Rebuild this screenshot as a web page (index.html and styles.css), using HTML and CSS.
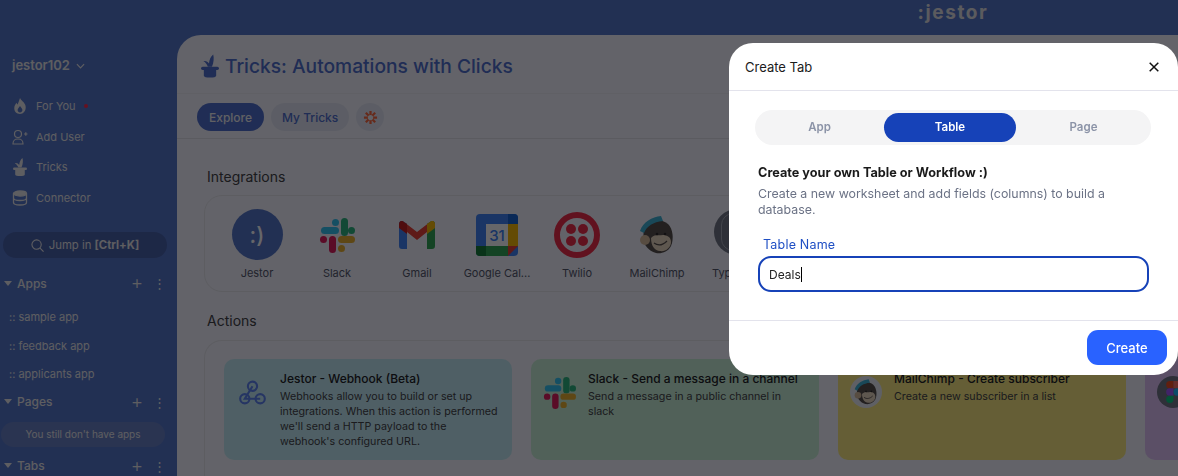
FILE: index.html
```html
<!DOCTYPE html>
<html lang="en">
<head>
<meta charset="utf-8">
<title>Create Tab</title>
<link rel="stylesheet" href="styles.css">
</head>
<body>
<div class="app">
  <header class="topbar"><span class="logo">:jestor</span></header>
  <div class="shell">
    <aside class="sidebar">
      <div class="account">jestor102
        <svg class="chev" viewBox="0 0 10 6" width="9" height="6"><path d="M1 1l4 4 4-4" fill="none" stroke="currentColor" stroke-width="1.3"/></svg>
      </div>
      <nav class="nav">
        <div class="nav-row">
          <svg viewBox="0 0 16 20" width="13" height="16"><path fill="currentColor" d="M8 0c1 3 6 5 7 10 1 6-3 10-7 10s-8-3-7-9c.4-2 1.500-3 2.500-5 .5 1 1 2 1.500 2C6 6 7 3 8 0zm0 10c-1 2-3 3-3 5s1.500 3 3 3 3-1 3-3-2-3-3-5z"/></svg>
          <span>For You</span><i class="dot"></i>
        </div>
        <div class="nav-row">
          <svg viewBox="0 0 16 16" width="16" height="16" fill="none" stroke="currentColor" stroke-width="1.200"><circle cx="6" cy="5" r="3.500"/><path d="M1 15c0-2 0-5 5-5s5 3 5 5zM12 5h3.500M13.800 3.200v3.500"/></svg>
          <span>Add User</span>
        </div>
        <div class="nav-row">
          <svg viewBox="0 0 14 18" width="14" height="18"><use href="#hat"/></svg>
          <span>Tricks</span>
        </div>
        <div class="nav-row">
          <svg viewBox="0 0 16 16" width="16" height="16" fill="none" stroke="currentColor" stroke-width="1.300"><ellipse cx="8" cy="3.500" rx="6.500" ry="2.500" fill="currentColor"/><path d="M1.500 3.500v9c0 1.500 3 2.500 6.500 2.500s6.500-1 6.500-2.500v-9M1.500 8c0 1.500 3 2.500 6.500 2.500s6.500-1 6.500-2.500"/></svg>
          <span>Connector</span>
        </div>
      </nav>
      <div class="jump">
        <svg viewBox="0 0 14 14" width="13" height="13" fill="none" stroke="currentColor" stroke-width="1.200"><circle cx="6" cy="6" r="5"/><path d="M9.500 9.500L13.500 13.500"/></svg>
        <span>Jump in <b>[Ctrl+K]</b></span>
      </div>
      <div class="section section-apps"><i class="tri"></i><span class="section-name">Apps</span><span class="plus">+</span><span class="more">⋮</span></div>
      <ul class="apps">
        <li>:: sample app</li>
        <li>:: feedback app</li>
        <li>:: applicants app</li>
      </ul>
      <div class="section"><i class="tri"></i><span class="section-name">Pages</span><span class="plus">+</span><span class="more">⋮</span></div>
      <div class="empty">You still don't have apps</div>
      <div class="section"><i class="tri"></i><span class="section-name">Tabs</span><span class="plus">+</span><span class="more">⋮</span></div>
    </aside>
    <main class="main">
      <div class="title-row">
        <svg class="title-hat" viewBox="0 0 14 18" width="18" height="24"><use href="#hat"/></svg>
        <h1>Tricks: Automations with Clicks</h1>
      </div>
      <div class="tabs-row">
        <span class="pill pill-on">Explore</span>
        <span class="pill pill-mine">My Tricks</span>
        <span class="pill pill-round">
          <svg viewBox="0 0 16 16" width="15" height="15" fill="none" stroke="#ff6a3c" stroke-width="2.400"><path d="M8 1v14M1 8h14M3 3l10 10M13 3L3 13"/><circle cx="8" cy="8" r="2.800" fill="#f2f4fb" stroke="none"/></svg>
        </span>
      </div>
      <h2>Integrations</h2>
      <div class="panel integrations">
        <div class="tile">
          <span class="tile-icon jestor-icon">:)</span>
          <span class="tile-name">Jestor</span>
        </div>
        <div class="tile">
          <svg class="tile-icon" viewBox="0 0 36 36"><use href="#slack"/></svg>
          <span class="tile-name">Slack</span>
        </div>
        <div class="tile">
          <svg class="tile-icon" viewBox="0 0 36 28" width="36" height="28">
            <path fill="#4285f4" d="M0 3c0-3 3-4 5-2l3 2v25H3c-2 0-3-1-3-3z"/>
            <path fill="#34a853" d="M36 3c0-3-3-4-5-2l-3 2v25h5c2 0 3-1 3-3z"/>
            <path fill="#ea4335" d="M5 1l13 10L31 1v0l-3 2v8l-10 8L8 11V3z"/>
            <path fill="#fbbc04" d="M28 3l3-2c2-2 5-1 5 2v4l-8 6z"/>
            <path fill="#c5221f" d="M0 3c0-3 3-4 5-2l3 2v10L0 7z"/>
          </svg>
          <span class="tile-name">Gmail</span>
        </div>
        <div class="tile">
          <svg class="tile-icon" viewBox="0 0 42 42" width="42" height="42">
            <rect width="42" height="42" rx="4" fill="#4285f4"/>
            <path fill="#1967d2" d="M32 0h6a4 4 0 0 1 4 4v6H32z"/>
            <rect x="32" y="10" width="10" height="22" fill="#fbbc04"/>
            <path fill="#34a853" d="M0 32h32v10H4a4 4 0 0 1-4-4z"/>
            <path fill="#188038" d="M0 32h10v10H4a4 4 0 0 1-4-4z"/>
            <path fill="#ea4335" d="M32 42V32h10z"/>
            <rect x="10" y="10" width="22" height="22" fill="#fff"/>
            <text x="21" y="27" class="cal-text">31</text>
          </svg>
          <span class="tile-name">Google Cal...</span>
        </div>
        <div class="tile">
          <svg class="tile-icon" viewBox="0 0 46 46" width="46" height="46"><circle cx="23" cy="23" r="20" fill="none" stroke="#f22f46" stroke-width="6"/><circle cx="17" cy="17" r="5" fill="#f22f46"/><circle cx="29" cy="17" r="5" fill="#f22f46"/><circle cx="17" cy="29" r="5" fill="#f22f46"/><circle cx="29" cy="29" r="5" fill="#f22f46"/></svg>
          <span class="tile-name">Twilio</span>
        </div>
        <div class="tile">
          <svg class="tile-icon" viewBox="0 0 36 38" width="36" height="38"><use href="#chimp"/></svg>
          <span class="tile-name">MailChimp</span>
        </div>
        <div class="tile">
          <span class="tile-icon typeform-icon"><i class="typeform-ring"></i></span>
          <span class="tile-name">Typeform</span>
        </div>
      </div>
      <h2 class="actions-title">Actions</h2>
      <div class="panel actions">
        <article class="action action-blue">
          <svg class="action-icon action-icon-hook" viewBox="0 0 28 26" width="27" height="25" fill="none" stroke="#5f86f0" stroke-width="2.200"><circle cx="14" cy="6.500" r="4.800"/><circle cx="6" cy="19.500" r="4.800"/><circle cx="22" cy="19.500" r="4.800"/><path d="M14 6.500L6 19.500H22"/></svg>
          <div><h3>Jestor - Webhook (Beta)</h3><p>Webhooks allow you to build or set up integrations. When this action is performed we'll send a HTTP payload to the webhook's configured URL.</p></div>
        </article>
        <article class="action action-green">
          <svg class="action-icon" viewBox="0 0 36 36" width="33" height="33"><use href="#slack"/></svg>
          <div><h3>Slack - Send a message in a channel</h3><p>Send a message in a public channel in slack</p></div>
        </article>
        <article class="action action-yellow">
          <span class="chimp-badge"><svg viewBox="0 0 36 38" width="24" height="26"><use href="#chimp"/></svg></span>
          <div><h3>MailChimp - Create subscriber</h3><p>Create a new subscriber in a list</p></div>
        </article>
        <article class="action action-purple">
          <span class="figma-badge">
            <svg viewBox="0 0 12 18" width="15" height="22"><path fill="#f24e1e" d="M3 0h3v6H3a3 3 0 0 1 0-6z"/><path fill="#ff7262" d="M6 0h3a3 3 0 0 1 0 6H6z"/><path fill="#a259ff" d="M3 6h3v6H3a3 3 0 0 1 0-6z"/><circle cx="9" cy="9" r="3" fill="#1abcfe"/><path fill="#0acf83" d="M3 12h3v3a3 3 0 1 1-3-3z"/></svg>
          </span>
        </article>
      </div>
    </main>
  </div>
</div>

<div class="overlay"></div>

<section class="modal">
  <header class="modal-head">
    <span>Create Tab</span>
    <svg viewBox="0 0 10 10" width="10" height="10" fill="none" stroke="#111" stroke-width="1.500"><path d="M.7.7l8.600 8.600M9.300.7L.7 9.300"/></svg>
  </header>
  <div class="modal-body">
    <div class="segment">
      <span>App</span>
      <span class="seg-on">Table</span>
      <span>Page</span>
    </div>
    <h4>Create your own Table or Workflow :)</h4>
    <p class="desc">Create a new worksheet and add fields (columns) to build a database.</p>
    <label class="field-label">Table Name</label>
    <div class="input"><span>Deals</span><i class="caret"></i></div>
  </div>
  <footer class="modal-foot"><span class="create">Create</span></footer>
</section>

<svg class="defs" width="0" height="0">
  <defs>
    <g id="hat" fill="currentColor">
      <rect x="0" y="9.500" width="14" height="2.600" rx="1.300"/>
      <path d="M2.200 11.500h9.600v5c0 1-2 1.500-4.800 1.500s-4.800-.5-4.800-1.500z"/>
      <path d="M5.300 9.500C4.700 8 3.500 6 1.800 5.200 3.600 4.600 5.300 5.600 6.200 7 6.500 4 7.500 1.500 9.500 0c.7 2.500.5 6.500-1 9.500z"/>
    </g>
    <g id="slack">
      <rect x="13" y="2" width="7" height="7" rx="3.500" fill="#36c5f0"/>
      <rect x="2" y="10" width="18" height="7" rx="3.500" fill="#36c5f0"/>
      <rect x="22" y="1" width="7" height="18" rx="3.500" fill="#2eb67d"/>
      <rect x="29" y="10" width="7" height="7" rx="3.500" fill="#2eb67d"/>
      <rect x="1" y="19" width="7" height="7" rx="3.500" fill="#e01e5a"/>
      <rect x="10" y="19" width="7" height="17" rx="3.500" fill="#e01e5a"/>
      <rect x="19" y="19" width="17" height="7" rx="3.500" fill="#ecb22e"/>
      <rect x="19" y="28" width="7" height="7" rx="3.500" fill="#ecb22e"/>
    </g>
    <g id="chimp">
      <path fill="#57504a" d="M5 12C8 4 20 1 29 8c5 5 6 15 3 22-3 6-10 8-15 7C9 35 5 28 4 24z"/>
      <path fill="#3fb4d4" d="M1 15C4 6 13 1 22 0l2 5C14 6 8 10 5 17z"/>
      <circle cx="6" cy="24" r="5" fill="#d9bd9c"/>
      <path fill="#ecd9bd" d="M12 22c3-4 8-2 12-3 4 0 8 2 8 7 0 6-6 10-11 9-5 0-9-5-9-13z"/>
      <path fill="none" stroke="#57504a" stroke-width="1.300" d="M15 27c4 3 9 2 13-2"/>
      <circle cx="18" cy="18" r="1.300" fill="#2d2a26"/><circle cx="26" cy="18" r="1.300" fill="#2d2a26"/>
    </g>
  </defs>
</svg>
</body>
</html>
```
FILE: styles.css
```css
* { box-sizing: border-box; }
html, body { margin: 0; padding: 0; width: 1178px; height: 476px; overflow: hidden; }
body { font-family: Inter, "Liberation Sans", sans-serif; background: #5678c8; color: #333; }
h1, h2, h3, h4, p, ul { margin: 0; padding: 0; }
.defs { position: absolute; }

.app { width: 1178px; height: 476px; display: flex; flex-direction: column; background: #5678c8; }
.topbar { height: 35px; flex: none; display: flex; justify-content: center; padding-left: 728px; }
.logo { font-size: 19px; font-weight: 700; letter-spacing: 1.6px; color: #e4e4e4; line-height: 26px; }
.shell { display: flex; flex: 1; min-height: 0; }

.sidebar { width: 177px; flex: none; color: #eaeaea; font-size: 11px; }
.account { padding: 22px 0 0 12px; height: 56px; font-size: 13px; font-weight: 600; line-height: 16px; display: flex; align-items: flex-start; gap: 6px; }
.chev { margin-top: 6px; }
.nav { padding-left: 12px; }
.nav-row { height: 30.500px; display: flex; align-items: center; gap: 8px; }
.nav-row svg { width: 16px; flex: none; }
.nav-row span { font-weight: 400; }
.dot { width: 4px; height: 4px; margin-left: 0; border-radius: 50%; background: #ff2b4a; }
.jump { margin: 19px 10px 0 3px; height: 26px; border-radius: 13px; background: #4a64a8; display: flex; align-items: center; justify-content: center; gap: 5px; font-size: 11.300px; }
.jump b { font-weight: 700; }
.section { display: flex; align-items: center; height: 20px; padding: 0 0 0 4px; font-size: 12px; font-weight: 500; }
.section-apps { margin-top: 15px; }
.tri { width: 0; height: 0; border-left: 4px solid transparent; border-right: 4px solid transparent; border-top: 5px solid #eaeaea; margin-right: 5px; }
.section-name { flex: 1; }
.plus { font-size: 19px; font-weight: 300; width: 14px; text-align: center; line-height: 20px; margin-right: 9px; }
.more { font-size: 13px; width: 8px; text-align: center; margin-right: 16px; }
.apps { list-style: none; padding: 10px 0 3px 9px; }
.apps li { height: 28.500px; line-height: 28.500px; font-size: 11px; }
.empty { margin: 10px 12px 9px 1px; height: 25px; border-radius: 13px; background: #6a83c4; line-height: 25px; text-align: center; font-size: 10px; }

.main { flex: 1; background: #f7f8fe; border-radius: 24px 0 0 0; overflow: hidden; color: #333; min-width: 0; }
.title-row { height: 59px; padding: 4px 0 0 24px; border-bottom: 1px solid #f0f0f4; display: flex; align-items: center; gap: 6px; }
.title-row h1 { font-size: 19.200px; font-weight: 500; color: #5070cc; }
.title-hat { color: #5070cc; }
.tabs-row { height: 45px; padding: 9px 0 0 20px; border-bottom: 1px solid #e4e4e8; display: flex; gap: 7px; align-items: flex-start; }
.pill { height: 28px; padding: 0 12px; border-radius: 14px; background: #e6e9f5; color: #5070cc; font-size: 12px; font-weight: 500; display: flex; align-items: center; }
.pill-on { background: #5070cc; color: #f2f2f2; }
.pill-mine { padding: 0 11px; }
.pill-round { width: 28px; padding: 0; justify-content: center; }
h2 { font-size: 14px; font-weight: 400; color: #444; padding: 29px 0 0 30px; line-height: 18px; }
.panel { margin-left: 27px; border: 1px solid #e8e8ec; border-radius: 18px; }
.integrations { height: 97px; margin-top: 9px; display: flex; padding-top: 13px; padding-left: 12px; overflow: hidden; }
.tile { width: 80px; flex: none; display: flex; flex-direction: column; align-items: center; position: relative; height: 71px; justify-content: flex-end; }
.tile-icon { position: absolute; top: 0; width: 36px; height: 36px; }
.tile:nth-child(1) .tile-icon { width: 51px; height: 51px; }
.tile:nth-child(2) .tile-icon { top: 8px; }
.tile:nth-child(3) .tile-icon { top: 12px; height: 28px; }
.tile:nth-child(4) .tile-icon { top: 5px; width: 42px; height: 42px; }
.tile:nth-child(5) .tile-icon { top: 3px; width: 46px; height: 46px; }
.tile:nth-child(6) .tile-icon { top: 7px; width: 36px; height: 38px; }
.jestor-icon { background: #5678c8; color: #fff; border-radius: 50%; display: flex; align-items: center; justify-content: center; font-size: 22px; font-weight: 500; }
.typeform-icon { top: 0; width: 46px !important; height: 46px !important; background: #737885; border-radius: 50%; display: flex; align-items: center; justify-content: center; }
.typeform-ring { width: 32px; height: 38px; border: 1px solid #a6aab4; border-radius: 12px; }
.tile-name { font-size: 11px; color: #555a6a; white-space: nowrap; line-height: 14px; }
.cal-text { font: 500 15px Inter, sans-serif; fill: #4285f4; text-anchor: middle; }
.actions-title { padding-top: 20px; line-height: 18px; }
.actions { margin-top: 10px; height: 200px; display: flex; gap: 19px; padding: 18px 0 0 19px; border-right: 0; border-radius: 18px 0 0 0; }
.action { width: 288px; height: 101px; flex: none; border-radius: 10px; display: flex; padding: 11px 8px 0 15px; gap: 14px; }
.action h3 { font-size: 12px; font-weight: 500; color: #222; line-height: 18px; white-space: nowrap; }
.action p { font-size: 10.700px; line-height: 15px; color: #444; margin-top: 1px; }
.action-icon { flex: none; margin-top: 6px; }
.action-icon-hook { margin-top: 10px; }
.action-blue { background: #c6eef5; }
.action-green { background: #caf2d6; padding: 11px 30px 0 12px; gap: 12px; }
.action-yellow { background: #fcec80; padding-left: 12px; gap: 12px; }
.action-purple { background: #e3c6f8; padding-left: 12px; }
.chimp-badge, .figma-badge { width: 32px; height: 32px; border-radius: 50%; background: #eef0f4; display: flex; align-items: center; justify-content: center; flex: none; margin-top: 6px; }
.figma-badge { background: #737885; }

.overlay { position: fixed; inset: 0; background: rgba(0, 0, 5, .6); }

.modal { position: fixed; left: 729px; top: 43px; width: 449px; height: 332px; background: #fff; border-radius: 24px; display: flex; flex-direction: column; }
.modal-head { height: 48px; flex: none; border-bottom: 1px solid #e3e3ec; display: flex; align-items: center; justify-content: space-between; padding: 1px 19px 0 16px; font-size: 13px; color: #1c1c1c; }
.modal-body { flex: 1; padding: 19px 30px 0 29px; border-bottom: 1px solid #e3e3ec; }
.segment { margin-left: -3px; margin-right: -3px; height: 35px; border-radius: 18px; background: #f4f4f5; display: flex; align-items: center; font-size: 11.500px; font-weight: 600; color: #8b93a7; }
.segment span { width: 129px; text-align: center; line-height: 29px; height: 29px; }
.segment .seg-on { width: 132px; background: #1642b8; color: #fff; border-radius: 15px; }
.segment span:last-child { width: 135px; }
h4 { font-size: 12.700px; font-weight: 700; color: #1a1a1a; margin-top: 20px; line-height: 16px; }
.desc { font-size: 12.360px; line-height: 16px; color: #6b7285; margin-top: 5px; }
.field-label { display: block; font-size: 12.500px; color: #1f4fc4; margin: 19px 0 0 5px; line-height: 16px; letter-spacing: .2px; }
.input { height: 36px; margin: 3px -1px 0 0; border: 2px solid #1642b8; border-radius: 13px; display: flex; align-items: center; padding-left: 9px; font-size: 12px; color: #222; }
.caret { width: 1px; height: 15px; background: #000; }
.modal-foot { height: 54px; flex: none; display: flex; justify-content: flex-end; padding: 9px 11px 0 0; }
.create { width: 80px; height: 35px; background: #2962ff; color: #fff; border-radius: 11px; font-size: 13px; font-weight: 500; display: flex; align-items: center; justify-content: center; }
```
